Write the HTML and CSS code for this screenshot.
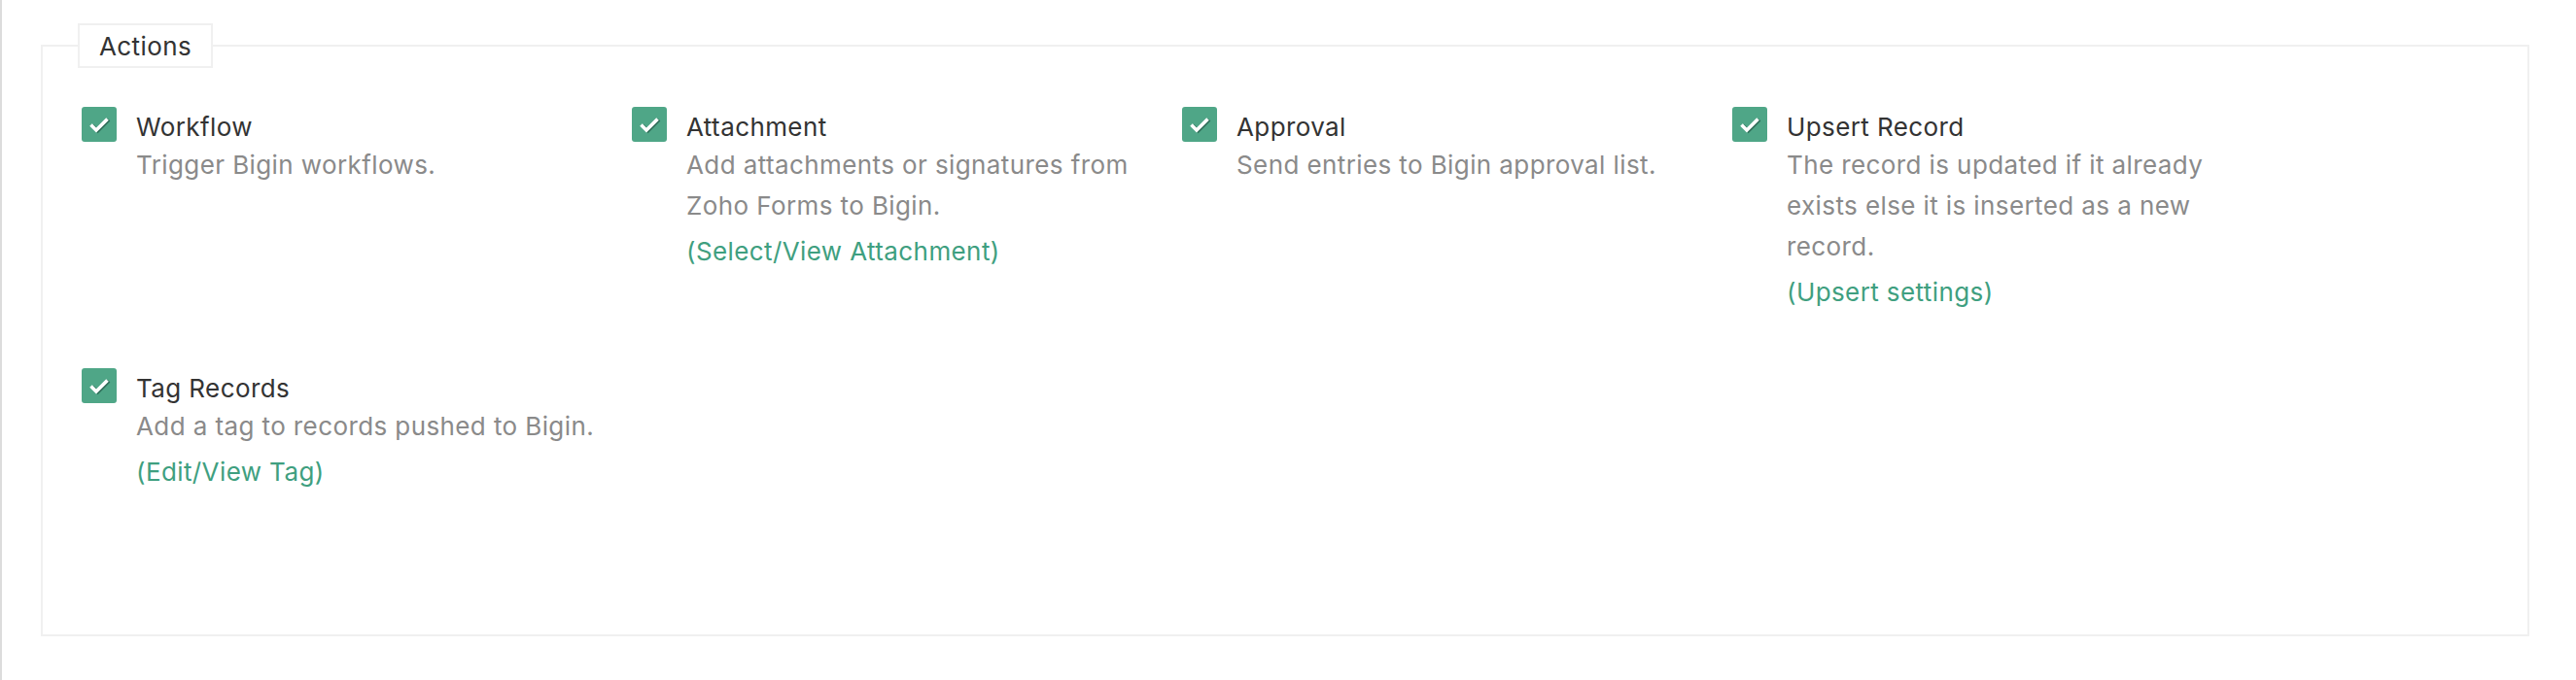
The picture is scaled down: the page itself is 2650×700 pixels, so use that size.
FILE: index.html
```html
<!DOCTYPE html>
<html lang="en">
<head>
    <meta charset="UTF-8">
    <title>Actions</title>
    <link rel="stylesheet" href="styles.css">
</head>
<body>
    <div class="page">
        <fieldset class="actions-box">
            <legend>Actions</legend>
            <div class="action-grid">
                <div class="action-item">
                    <span class="check">
                        <svg viewBox="0 0 36 36" width="36" height="36"><path d="M9.5 18.5l5.5 5.5L26.5 12.5" fill="none" stroke="#2f6e59" stroke-width="3.6" transform="translate(1.6 0.8)"/><path d="M9.5 18.5l5.5 5.5L26.5 12.5" fill="none" stroke="#fff" stroke-width="3.6"/></svg>
                    </span>
                    <div class="action-text">
                        <div class="action-title">Workflow</div>
                        <div class="action-desc">Trigger Bigin workflows.</div>
                    </div>
                </div>
                <div class="action-item">
                    <span class="check">
                        <svg viewBox="0 0 36 36" width="36" height="36"><path d="M9.5 18.5l5.5 5.5L26.5 12.5" fill="none" stroke="#2f6e59" stroke-width="3.6" transform="translate(1.6 0.8)"/><path d="M9.5 18.5l5.5 5.5L26.5 12.5" fill="none" stroke="#fff" stroke-width="3.6"/></svg>
                    </span>
                    <div class="action-text">
                        <div class="action-title">Attachment</div>
                        <div class="action-desc">Add attachments or signatures from Zoho Forms to Bigin.</div>
                        <a class="action-link" href="#">(Select/View Attachment)</a>
                    </div>
                </div>
                <div class="action-item">
                    <span class="check">
                        <svg viewBox="0 0 36 36" width="36" height="36"><path d="M9.5 18.5l5.5 5.5L26.5 12.5" fill="none" stroke="#2f6e59" stroke-width="3.6" transform="translate(1.6 0.8)"/><path d="M9.5 18.5l5.5 5.5L26.5 12.5" fill="none" stroke="#fff" stroke-width="3.6"/></svg>
                    </span>
                    <div class="action-text">
                        <div class="action-title">Approval</div>
                        <div class="action-desc">Send entries to Bigin approval list.</div>
                    </div>
                </div>
                <div class="action-item">
                    <span class="check">
                        <svg viewBox="0 0 36 36" width="36" height="36"><path d="M9.5 18.5l5.5 5.5L26.5 12.5" fill="none" stroke="#2f6e59" stroke-width="3.6" transform="translate(1.6 0.8)"/><path d="M9.5 18.5l5.5 5.5L26.5 12.5" fill="none" stroke="#fff" stroke-width="3.6"/></svg>
                    </span>
                    <div class="action-text">
                        <div class="action-title">Upsert Record</div>
                        <div class="action-desc">The record is updated if it already exists else it is inserted as a new record.</div>
                        <a class="action-link" href="#">(Upsert settings)</a>
                    </div>
                </div>
                <div class="action-item">
                    <span class="check">
                        <svg viewBox="0 0 36 36" width="36" height="36"><path d="M9.5 18.5l5.5 5.5L26.5 12.5" fill="none" stroke="#2f6e59" stroke-width="3.6" transform="translate(1.6 0.8)"/><path d="M9.5 18.5l5.5 5.5L26.5 12.5" fill="none" stroke="#fff" stroke-width="3.6"/></svg>
                    </span>
                    <div class="action-text">
                        <div class="action-title">Tag Records</div>
                        <div class="action-desc">Add a tag to records pushed to Bigin.</div>
                        <a class="action-link" href="#">(Edit/View Tag)</a>
                    </div>
                </div>
            </div>
        </fieldset>
    </div>
</body>
</html>
```

FILE: styles.css
```css
body {
    margin: 0;
    background: #fff;
    font-family: Inter, "Noto Sans", sans-serif;
    letter-spacing: 0.4px;
}
.page {
    border-left: 2px solid #dcdcdc;
    min-height: 700px;
    box-sizing: border-box;
    padding: 24px 48px 0 40px;
}
.actions-box {
    margin: 0;
    border: 2px solid #f0f0f0;
    padding: 40px 36px 146px 36px;
}
.actions-box legend {
    border: 2px solid #f0f0f0;
    padding: 0 20px;
    height: 46px;
    line-height: 44px;
    box-sizing: border-box;
    font-size: 26px;
    color: #333;
}
.action-grid {
    display: grid;
    grid-template-columns: repeat(4, 566px);
    row-gap: 57px;
    margin-left: 4px;
}
.action-item {
    display: flex;
    gap: 20px;
}
.check {
    flex: none;
    width: 36px;
    height: 36px;
    border-radius: 3px;
    background: #4fa687;
}
.check svg {
    display: block;
}
.action-text {
    width: 490px;
}
.action-title {
    padding-top: 3px;
    font-size: 26px;
    line-height: 36px;
    color: #333;
}
.action-desc {
    font-size: 26px;
    line-height: 42px;
    color: #8a8a8a;
}
.action-link {
    display: block;
    margin-top: 5px;
    font-size: 26px;
    line-height: 42px;
    color: #3f9f80;
    text-decoration: none;
}
```
